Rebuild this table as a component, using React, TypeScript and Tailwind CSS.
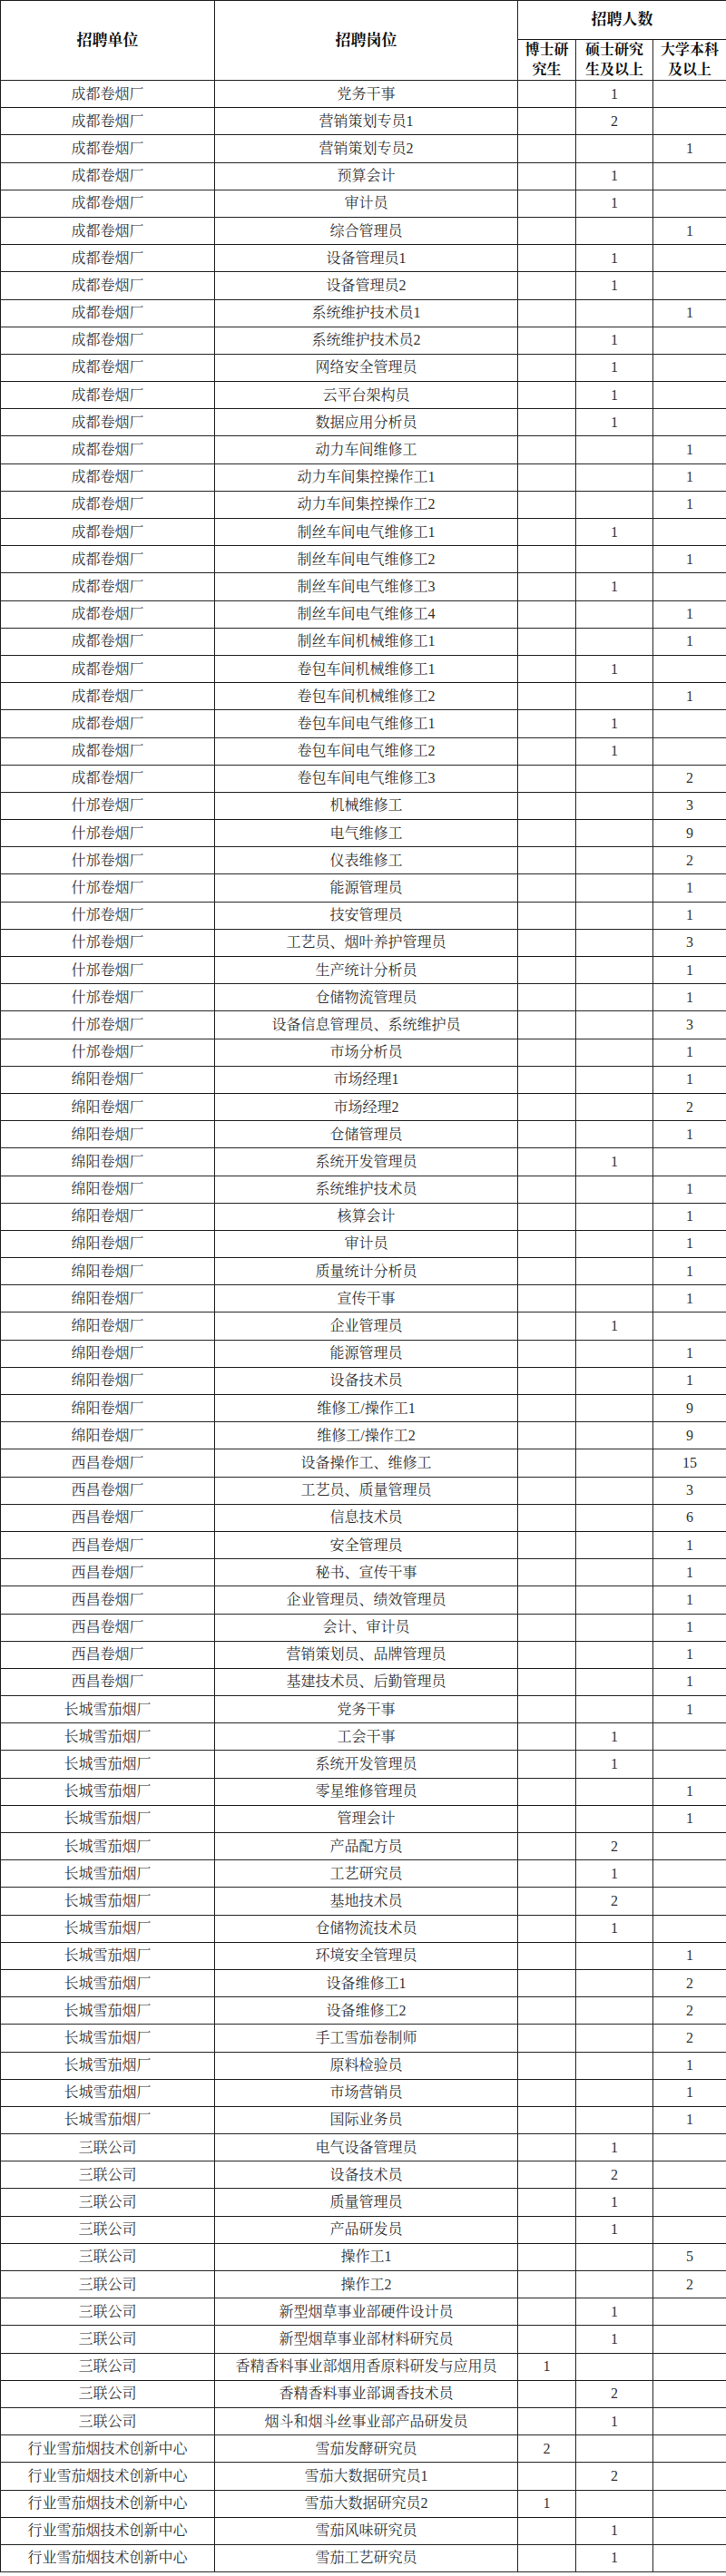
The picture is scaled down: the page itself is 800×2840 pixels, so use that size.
import React from "react";

type Row = [string, string, string, string, string];

const CD = "成都卷烟厂";
const SF = "什邡卷烟厂";
const MY = "绵阳卷烟厂";
const XC = "西昌卷烟厂";
const CC = "长城雪茄烟厂";
const SL = "三联公司";
const HY = "行业雪茄烟技术创新中心";

const rows: Row[] = [
  [CD, "党务干事", "", "1", ""],
  [CD, "营销策划专员1", "", "2", ""],
  [CD, "营销策划专员2", "", "", "1"],
  [CD, "预算会计", "", "1", ""],
  [CD, "审计员", "", "1", ""],
  [CD, "综合管理员", "", "", "1"],
  [CD, "设备管理员1", "", "1", ""],
  [CD, "设备管理员2", "", "1", ""],
  [CD, "系统维护技术员1", "", "", "1"],
  [CD, "系统维护技术员2", "", "1", ""],
  [CD, "网络安全管理员", "", "1", ""],
  [CD, "云平台架构员", "", "1", ""],
  [CD, "数据应用分析员", "", "1", ""],
  [CD, "动力车间维修工", "", "", "1"],
  [CD, "动力车间集控操作工1", "", "", "1"],
  [CD, "动力车间集控操作工2", "", "", "1"],
  [CD, "制丝车间电气维修工1", "", "1", ""],
  [CD, "制丝车间电气维修工2", "", "", "1"],
  [CD, "制丝车间电气维修工3", "", "1", ""],
  [CD, "制丝车间电气维修工4", "", "", "1"],
  [CD, "制丝车间机械维修工1", "", "", "1"],
  [CD, "卷包车间机械维修工1", "", "1", ""],
  [CD, "卷包车间机械维修工2", "", "", "1"],
  [CD, "卷包车间电气维修工1", "", "1", ""],
  [CD, "卷包车间电气维修工2", "", "1", ""],
  [CD, "卷包车间电气维修工3", "", "", "2"],
  [SF, "机械维修工", "", "", "3"],
  [SF, "电气维修工", "", "", "9"],
  [SF, "仪表维修工", "", "", "2"],
  [SF, "能源管理员", "", "", "1"],
  [SF, "技安管理员", "", "", "1"],
  [SF, "工艺员、烟叶养护管理员", "", "", "3"],
  [SF, "生产统计分析员", "", "", "1"],
  [SF, "仓储物流管理员", "", "", "1"],
  [SF, "设备信息管理员、系统维护员", "", "", "3"],
  [SF, "市场分析员", "", "", "1"],
  [MY, "市场经理1", "", "", "1"],
  [MY, "市场经理2", "", "", "2"],
  [MY, "仓储管理员", "", "", "1"],
  [MY, "系统开发管理员", "", "1", ""],
  [MY, "系统维护技术员", "", "", "1"],
  [MY, "核算会计", "", "", "1"],
  [MY, "审计员", "", "", "1"],
  [MY, "质量统计分析员", "", "", "1"],
  [MY, "宣传干事", "", "", "1"],
  [MY, "企业管理员", "", "1", ""],
  [MY, "能源管理员", "", "", "1"],
  [MY, "设备技术员", "", "", "1"],
  [MY, "维修工/操作工1", "", "", "9"],
  [MY, "维修工/操作工2", "", "", "9"],
  [XC, "设备操作工、维修工", "", "", "15"],
  [XC, "工艺员、质量管理员", "", "", "3"],
  [XC, "信息技术员", "", "", "6"],
  [XC, "安全管理员", "", "", "1"],
  [XC, "秘书、宣传干事", "", "", "1"],
  [XC, "企业管理员、绩效管理员", "", "", "1"],
  [XC, "会计、审计员", "", "", "1"],
  [XC, "营销策划员、品牌管理员", "", "", "1"],
  [XC, "基建技术员、后勤管理员", "", "", "1"],
  [CC, "党务干事", "", "", "1"],
  [CC, "工会干事", "", "1", ""],
  [CC, "系统开发管理员", "", "1", ""],
  [CC, "零星维修管理员", "", "", "1"],
  [CC, "管理会计", "", "", "1"],
  [CC, "产品配方员", "", "2", ""],
  [CC, "工艺研究员", "", "1", ""],
  [CC, "基地技术员", "", "2", ""],
  [CC, "仓储物流技术员", "", "1", ""],
  [CC, "环境安全管理员", "", "", "1"],
  [CC, "设备维修工1", "", "", "2"],
  [CC, "设备维修工2", "", "", "2"],
  [CC, "手工雪茄卷制师", "", "", "2"],
  [CC, "原料检验员", "", "", "1"],
  [CC, "市场营销员", "", "", "1"],
  [CC, "国际业务员", "", "", "1"],
  [SL, "电气设备管理员", "", "1", ""],
  [SL, "设备技术员", "", "2", ""],
  [SL, "质量管理员", "", "1", ""],
  [SL, "产品研发员", "", "1", ""],
  [SL, "操作工1", "", "", "5"],
  [SL, "操作工2", "", "", "2"],
  [SL, "新型烟草事业部硬件设计员", "", "1", ""],
  [SL, "新型烟草事业部材料研究员", "", "1", ""],
  [SL, "香精香料事业部烟用香原料研发与应用员", "1", "", ""],
  [SL, "香精香料事业部调香技术员", "", "2", ""],
  [SL, "烟斗和烟斗丝事业部产品研发员", "", "1", ""],
  [HY, "雪茄发酵研究员", "2", "", ""],
  [HY, "雪茄大数据研究员1", "", "2", ""],
  [HY, "雪茄大数据研究员2", "1", "", ""],
  [HY, "雪茄风味研究员", "", "1", ""],
  [HY, "雪茄工艺研究员", "", "1", ""],
];

const font = {
  fontFamily:
    '"Liberation Serif", "Noto Serif CJK SC", "Noto Sans CJK SC", serif',
};

export default function App() {
  return (
    <div className="w-[800px] bg-white" style={font}>
      <table className="w-[800px] table-fixed border-collapse text-[16px] text-[#333]">
        <colgroup>
          <col className="w-[236px]" />
          <col className="w-[334px]" />
          <col className="w-[64px]" />
          <col className="w-[85px]" />
          <col className="w-[81px]" />
        </colgroup>
        <thead>
          <tr className="h-[43px]">
            <th
              rowSpan={2}
              className="border border-[#222] text-[17px] font-bold text-[#111]"
            >
              招聘单位
            </th>
            <th
              rowSpan={2}
              className="border border-[#222] text-[17px] font-bold text-[#111]"
            >
              招聘岗位
            </th>
            <th
              colSpan={3}
              className="border border-[#222] text-[17px] font-bold text-[#111]"
            >
              招聘人数
            </th>
          </tr>
          <tr className="h-[45px]">
            <th className="border border-[#222] p-0 text-[16px] font-bold leading-[22px] text-[#111]">
              博士研
              <br />
              究生
            </th>
            <th className="border border-[#222] p-0 text-[16px] font-bold leading-[22px] text-[#111]">
              硕士研究
              <br />
              生及以上
            </th>
            <th className="border border-[#222] p-0 text-[16px] font-bold leading-[22px] text-[#111]">
              大学本科
              <br />
              及以上
            </th>
          </tr>
        </thead>
        <tbody>
          {rows.map((r, i) => (
            <tr key={i} className="h-[30.2px]">
              {r.map((c, j) => (
                <td
                  key={j}
                  className="border border-[#222] p-0 text-center leading-none whitespace-nowrap"
                >
                  {c}
                </td>
              ))}
            </tr>
          ))}
        </tbody>
      </table>
    </div>
  );
}
